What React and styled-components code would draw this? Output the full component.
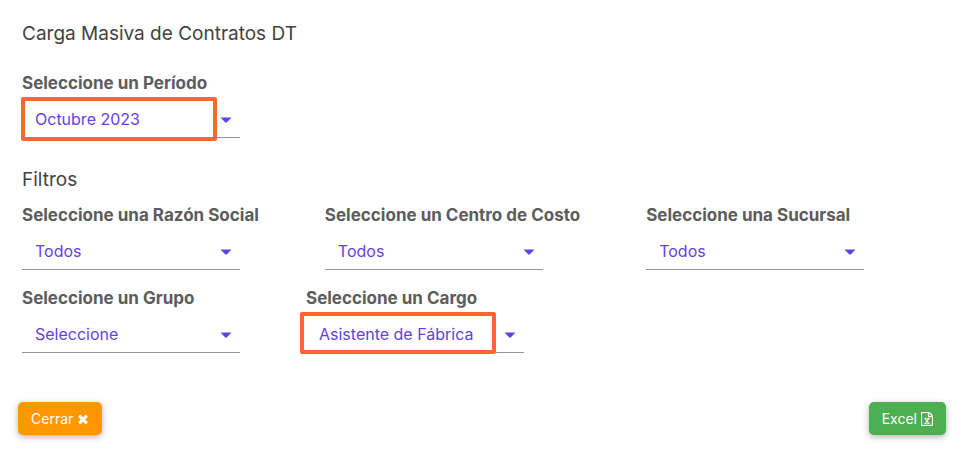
import styled, { createGlobalStyle } from "styled-components";

const GlobalStyle = createGlobalStyle`
    * {
        box-sizing: border-box;
    }
    body {
        margin: 0;
        background-color: #ffffff;
        color: #424242;
        font-family: Inter, "Liberation Sans", sans-serif;
    }
`;

const Page = styled.main`
    padding: 21px 16px 16px 18px;
`;

const Form = styled.form`
    padding-left: 4px;
`;

const Title = styled.h1`
    margin: 0 0 23px;
    font-size: 19px;
    font-weight: 400;
    line-height: 26px;
`;

const Subtitle = styled(Title).attrs({ as: "h2" })`
    margin: 29px 0 9px;
`;

const FieldRow = styled.div`
    display: flex;
    flex-wrap: wrap;
    gap: 66px;
    & + & {
        margin-top: 15px;
    }
`;

const Field = styled.div`
    display: flex;
    flex-direction: column;
    align-items: flex-start;
`;

const Label = styled.label`
    color: #5c5c5c;
    font-size: 17px;
    font-weight: 700;
    line-height: 26px;
`;

const SelectBox = styled.div`
    position: relative;
    width: 218px;
    margin-top: 5px;
`;

const Select = styled.select`
    display: block;
    appearance: none;
    width: 100%;
    height: 37px;
    padding: 0 40px 0 13px;
    border: 0;
    border-bottom: 1px solid #949494;
    border-radius: 0;
    outline: none;
    background: transparent;
    color: #6442e0;
    font-family: inherit;
    font-size: 16px;
    font-weight: 400;
    cursor: pointer;
`;

const Arrow = styled.svg`
    position: absolute;
    top: 16px;
    right: 8px;
    width: 12px;
    height: 6px;
    fill: #6442e0;
    pointer-events: none;
`;

const Highlight = styled.span`
    position: absolute;
    top: -4px;
    bottom: ${(props) => props.$bottom}px;
    left: ${(props) => props.$left}px;
    width: 196px;
    border: 4px solid #ff6633;
    border-radius: 2px;
    pointer-events: none;
`;

const Actions = styled.footer`
    display: flex;
    justify-content: space-between;
    margin-top: 49px;
`;

const Button = styled.button`
    display: flex;
    align-items: center;
    gap: 4px;
    height: 33px;
    padding: 0 13px;
    border: 0;
    border-radius: 5px;
    background-color: ${(props) => props.$color};
    box-shadow: 0 2px 6px rgba(0, 0, 0, 0.3);
    color: white;
    font-family: inherit;
    font-size: 14px;
    cursor: pointer;
    svg {
        height: 14px;
        fill: currentColor;
    }
`;

const SelectField = ({ id, label, options, highlight }) => {
    return (
        <Field>
            <Label htmlFor={id}>{label}</Label>
            <SelectBox>
                <Select id={id}>
                    {options.map((option) => (
                        <option key={option}>{option}</option>
                    ))}
                </Select>
                <Arrow viewBox="0 0 12 6" aria-hidden="true">
                    <path d="M.5.5h11L6.7 5.6H5.3z" />
                </Arrow>
                {highlight && (
                    <Highlight
                        $left={highlight.left}
                        $bottom={highlight.bottom}
                    />
                )}
            </SelectBox>
        </Field>
    );
};

const CloseIcon = () => (
    <svg width="12" viewBox="160 0 1472 1792" aria-hidden="true">
        <path d="M1490 1322q0 40-28 68l-136 136q-28 28-68 28t-68-28l-294-294-294 294q-28 28-68 28t-68-28l-136-136q-28-28-28-68t28-68l294-294-294-294q-28-28-28-68t28-68l136-136q28-28 68-28t68 28l294 294 294-294q28-28 68-28t68 28l136 136q28 28 28 68t-28 68l-294 294 294 294q28 28 28 68z" />
    </svg>
);

const ExcelIcon = () => (
    <svg width="12" viewBox="128 0 1536 1792" aria-hidden="true">
        <path
            d="M1596 380q28 28 48 76t20 88v1152q0 40-28 68t-68 28h-1344q-40 0-68-28t-28-68v-1600q0-40 28-68t68-28h896q40 0 88 20t76 48zm-444-244v376h376q-10-29-22-41l-313-313q-12-12-41-22zm384 1528v-1024h-416q-40 0-68-28t-28-68v-416h-768v1536h1280zm-979-234v106h281v-106h-75l103-161q5-7 10-16.5t7.5-13.5 3.5-4h2q1 4 5 10 2 4 4.5 7.5t6 8 6.5 8.5l107 161h-76v106h291v-106h-68l-192-273 195-282h67v-107h-279v107h74l-103 159q-4 7-10 16.5t-9 13.5l-2 3h-2q-1-4-5-10-6-11-17-23l-106-159h76v-107h-290v107h68l189 272-194 283h-68z"
            stroke="currentColor"
            strokeWidth="30"
        />
    </svg>
);

const App = () => {
    return (
        <Page>
            <GlobalStyle />
            <Form id="contratos">
                <Title>Carga Masiva de Contratos DT</Title>
                <FieldRow>
                    <SelectField
                        id="periodo"
                        label="Seleccione un Período"
                        options={["Octubre 2023"]}
                        highlight={{ left: -1, bottom: -3 }}
                    />
                </FieldRow>
                <Subtitle>Filtros</Subtitle>
                <FieldRow>
                    <SelectField
                        id="razon"
                        label="Seleccione una Razón Social"
                        options={["Todos"]}
                    />
                    <SelectField
                        id="centro"
                        label="Seleccione un Centro de Costo"
                        options={["Todos"]}
                    />
                    <SelectField
                        id="sucursal"
                        label="Seleccione una Sucursal"
                        options={["Todos"]}
                    />
                </FieldRow>
                <FieldRow>
                    <SelectField
                        id="grupo"
                        label="Seleccione un Grupo"
                        options={["Seleccione"]}
                    />
                    <SelectField
                        id="cargo"
                        label="Seleccione un Cargo"
                        options={["Asistente de Fábrica"]}
                        highlight={{ left: -6, bottom: -1 }}
                    />
                </FieldRow>
            </Form>
            <Actions>
                <Button type="button" $color="#ff9800">
                    Cerrar <CloseIcon />
                </Button>
                <Button type="submit" form="contratos" $color="#4caf50">
                    Excel <ExcelIcon />
                </Button>
            </Actions>
        </Page>
    );
};

export default App;
